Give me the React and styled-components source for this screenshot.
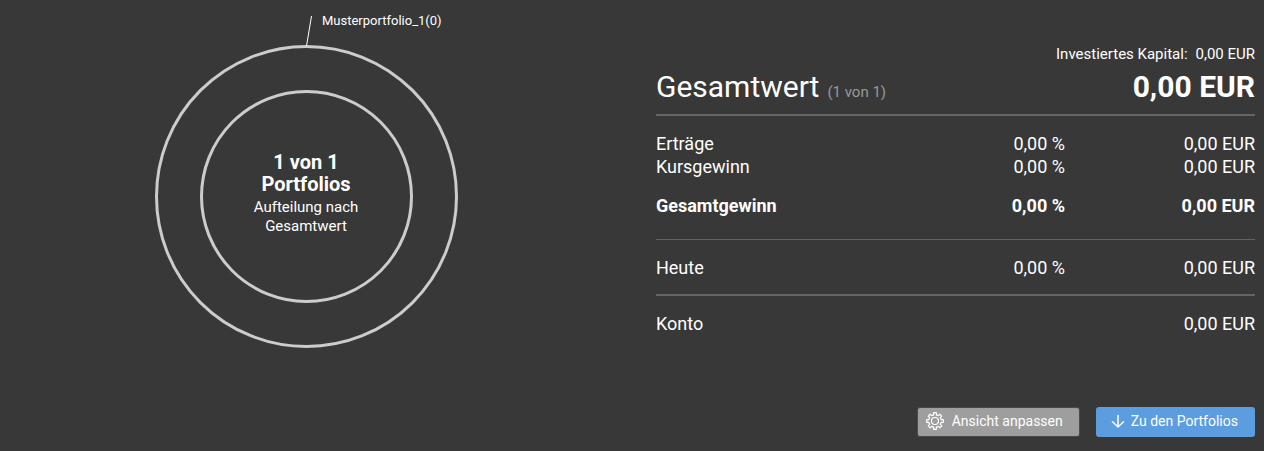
import React from "react";
import styled, { createGlobalStyle } from "styled-components";

const GlobalStyle = createGlobalStyle`
  * {
    box-sizing: border-box;
  }
  body {
    margin: 0;
    background: #383838;
    color: #fff;
    font-family: Roboto, "Liberation Sans", sans-serif;
  }
`;

const Page = styled.main`
  display: grid;
  grid-template-columns: 44fr 43fr;
  column-gap: 43px;
  padding-right: 9px;
`;
const ChartPanel = styled.section`
  display: flex;
  justify-content: center;
`;
const Chart = styled.svg`
  display: block;
  overflow: visible;
`;
const Ring = styled.circle`
  fill: none;
  stroke: #ccc;
  stroke-width: 3px;
`;
const Pointer = styled.line`
  stroke: #fff;
  stroke-width: 1px;
`;
const SliceLabel = styled.text`
  fill: #fff;
  font-size: 13px;
`;
const CenterText = styled.text`
  fill: #fff;
  text-anchor: middle;
  font-size: ${(props) => (props.$strong ? "20px" : "15px")};
  font-weight: ${(props) => (props.$strong ? 700 : 400)};
`;
const Summary = styled.section`
  display: flex;
  flex-direction: column;
  padding-top: 44px;
`;
const Invested = styled.p`
  display: flex;
  justify-content: flex-end;
  gap: 8px;
  margin: 0;
  font-size: 15px;
  line-height: 20px;
`;
const Header = styled.header`
  display: flex;
  align-items: baseline;
  padding: 5px 0 4px;
  border-bottom: 2px solid #646464;
  line-height: 36px;
`;
const Title = styled.h1`
  margin: 0;
  font-size: 30px;
  font-weight: 400;
`;
const Count = styled.span`
  margin-left: 8px;
  color: #999;
  font-size: 15px;
`;
const Total = styled.strong`
  margin-left: auto;
  font-size: 30px;
  font-weight: 700;
`;
const Table = styled.table`
  width: 100%;
  table-layout: fixed;
  border-spacing: 0;
  font-size: 18px;
  line-height: 23px;
`;
const Row = styled.tr`
  th,
  td {
    padding: ${(props) => (props.$spaced ? "16px" : "0")} 0
      ${(props) => props.$bottom || 0}px;
    border-bottom: ${(props) => props.$line || 0}px solid #646464;
    font-weight: ${(props) => (props.$bold ? 700 : 400)};
    text-align: right;
  }
  th {
    text-align: left;
  }
  td:last-child {
    width: 190px;
  }
`;
const Actions = styled.div`
  display: flex;
  justify-content: flex-end;
  align-items: center;
  gap: 16px;
  margin-top: 72px;
`;
const Button = styled.button`
  display: flex;
  align-items: center;
  gap: ${(props) => (props.$primary ? "6px" : "8px")};
  height: 30px;
  padding: ${(props) => (props.$primary ? "0 17px 2px 15px" : "0 16px 2px 8px")};
  border: ${(props) => (props.$primary ? "none" : "1px solid #4a4a4a")};
  border-radius: 3px;
  background: ${(props) => (props.$primary ? "#5c9de0" : "#9e9e9e")};
  color: #fff;
  font: inherit;
  font-size: 14px;
  cursor: pointer;
`;
const Icon = styled.svg`
  fill: none;
  stroke: #fff;
  stroke-linecap: round;
  stroke-linejoin: round;
`;

const rows = [
  { label: "Erträge", percent: "0,00 %", spaced: true },
  { label: "Kursgewinn", percent: "0,00 %" },
  {
    label: "Gesamtgewinn",
    percent: "0,00 %",
    spaced: true,
    bold: true,
    bottom: 22,
    line: 1,
  },
  { label: "Heute", percent: "0,00 %", spaced: true, bottom: 15, line: 2 },
  { label: "Konto", percent: "", spaced: true },
];

// outline of a gear with flat teeth, centred on 9/9
const gearPath = (teeth, outer, inner) => {
  const step = (Math.PI * 2) / teeth;
  const points = [];
  for (let i = 0; i < teeth; i++) {
    [
      [inner, -0.29],
      [outer, -0.2],
      [outer, 0.2],
      [inner, 0.29],
    ].forEach(([radius, shift]) => {
      const angle = (i + shift) * step - Math.PI / 2;
      points.push(
        `${(9 + radius * Math.cos(angle)).toFixed(2)} ${(
          9 +
          radius * Math.sin(angle)
        ).toFixed(2)}`
      );
    });
  }
  return `M${points.join("L")}Z`;
};

const GearIcon = () => (
  <Icon width="18" height="18" viewBox="0 0 18 18" strokeWidth="1.2" aria-hidden="true">
    <path d={gearPath(8, 8.4, 6.3)} />
    <circle cx="9" cy="9" r="3.5" />
  </Icon>
);

const ArrowDownIcon = () => (
  <Icon width="14" height="14" viewBox="0 0 14 14" strokeWidth="1.5" aria-hidden="true">
    <path d="M7 1.5V13M1.5 7.8L7 13L12.5 7.8" />
  </Icon>
);

const PortfolioChart = () => (
  <Chart width="305" height="350" viewBox="0 0 305 350">
    <Ring cx="152.5" cy="196.5" r="150" />
    <Ring cx="152.5" cy="196.5" r="105" />
    <Pointer x1="157.5" y1="16" x2="152.5" y2="46" />
    <SliceLabel x="168" y="25">
      Musterportfolio_1(0)
    </SliceLabel>
    <CenterText $strong x="152" y="169">
      1 von 1
    </CenterText>
    <CenterText $strong x="152" y="191">
      Portfolios
    </CenterText>
    <CenterText x="152" y="212">
      Aufteilung nach
    </CenterText>
    <CenterText x="152" y="231">
      Gesamtwert
    </CenterText>
  </Chart>
);

const App = () => (
  <>
    <GlobalStyle />
    <Page>
      <ChartPanel>
        <PortfolioChart />
      </ChartPanel>
      <Summary>
        <Invested>
          <span>Investiertes Kapital:</span>
          <span>0,00 EUR</span>
        </Invested>
        <Header>
          <Title>Gesamtwert</Title>
          <Count>(1 von 1)</Count>
          <Total>0,00 EUR</Total>
        </Header>
        <Table>
          <tbody>
            {rows.map((row) => (
              <Row
                key={row.label}
                $spaced={row.spaced}
                $bold={row.bold}
                $bottom={row.bottom}
                $line={row.line}
              >
                <th scope="row">{row.label}</th>
                <td>{row.percent}</td>
                <td>0,00 EUR</td>
              </Row>
            ))}
          </tbody>
        </Table>
        <Actions>
          <Button type="button">
            <GearIcon />
            Ansicht anpassen
          </Button>
          <Button type="button" $primary>
            <ArrowDownIcon />
            Zu den Portfolios
          </Button>
        </Actions>
      </Summary>
    </Page>
  </>
);

export default App;
